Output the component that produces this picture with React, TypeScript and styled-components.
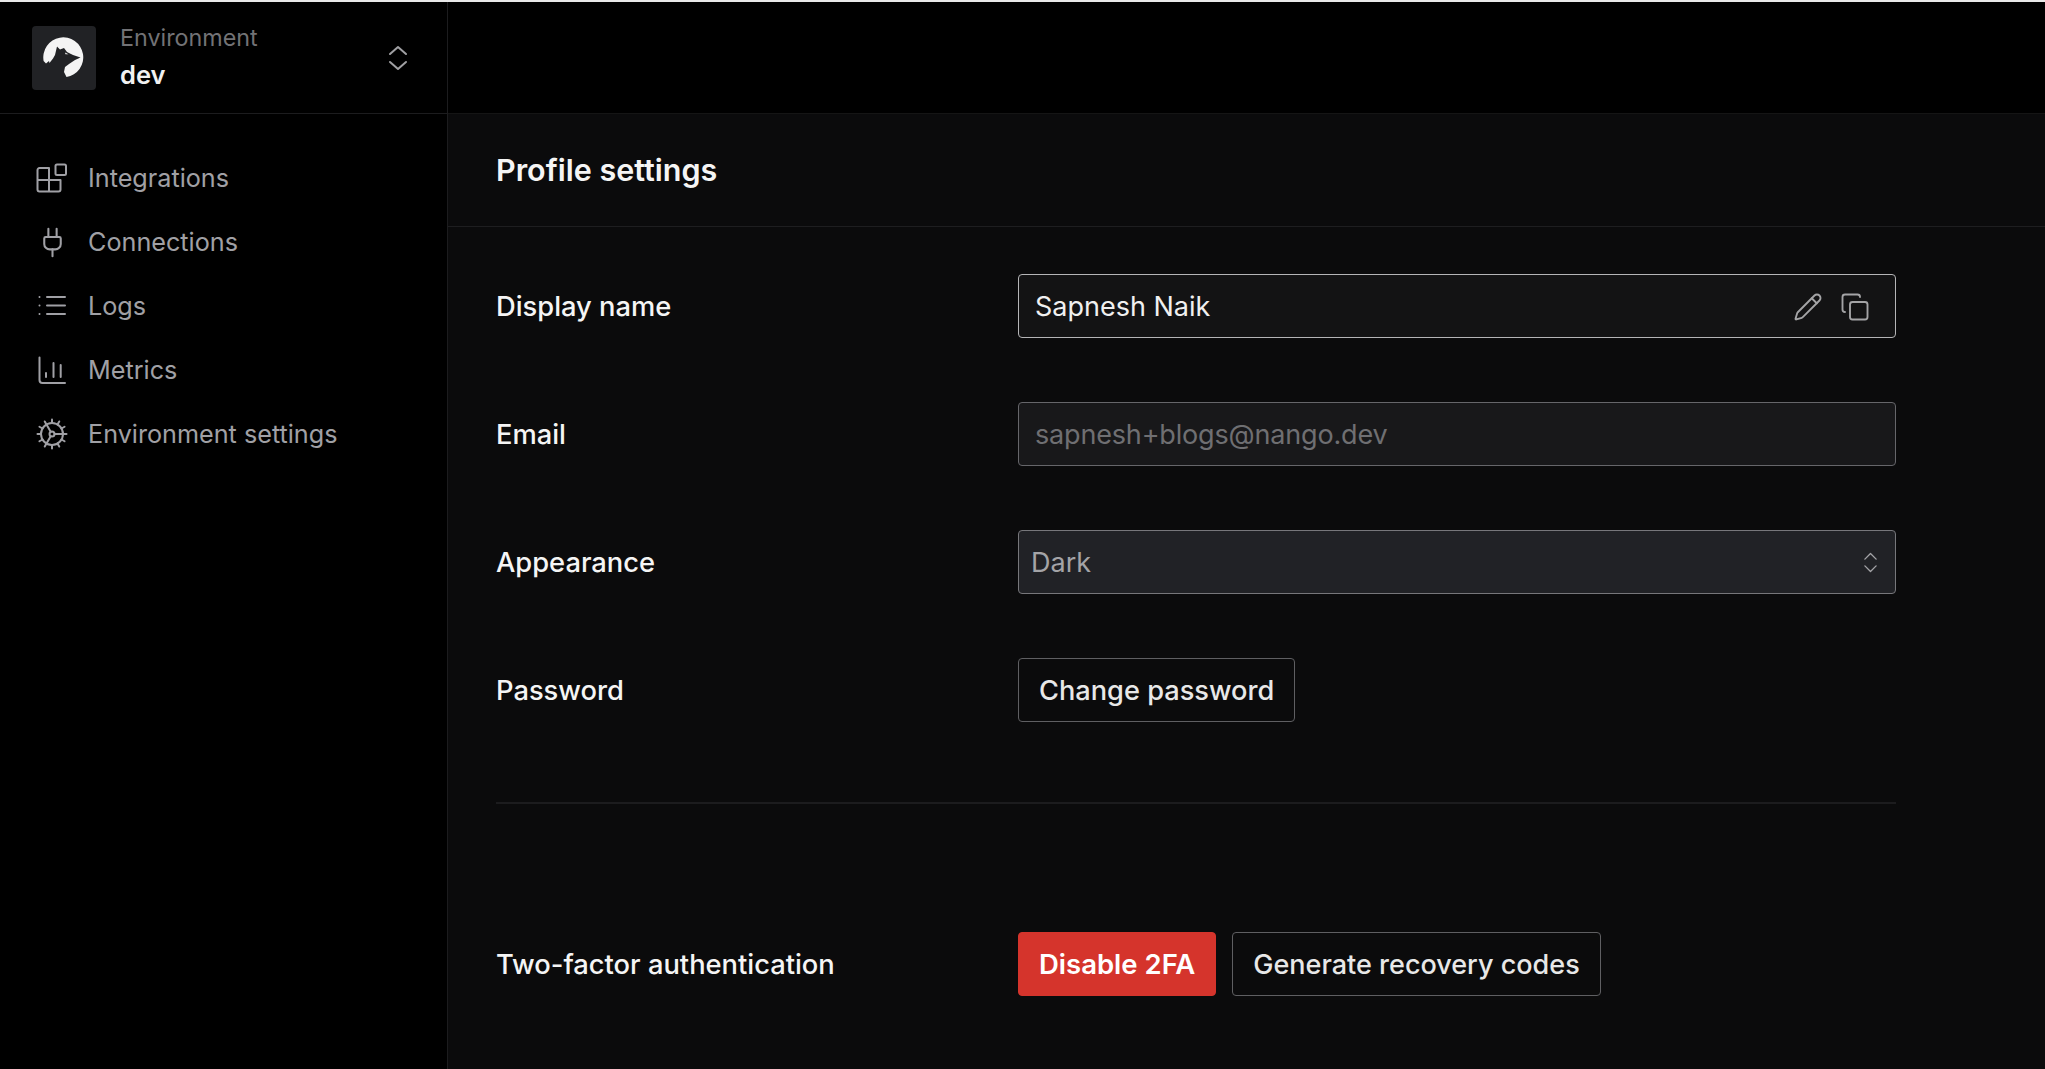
import React, { FC, ReactNode } from 'react';
import styled, { createGlobalStyle } from 'styled-components';
import { Plug, Pencil, Copy, ChevronsUpDown } from 'lucide-react';

const GlobalStyle = createGlobalStyle`
   * { box-sizing: border-box; }
   html, body { margin: 0; background: #000; }
   body { font-family: Inter, "Liberation Sans", sans-serif; overflow: hidden; }
`;

const IntegrationsIcon = () => (
   <svg width="32" height="32" viewBox="0 0 32 32" fill="none" stroke="currentColor" strokeWidth="2" strokeLinejoin="round">
      <rect x="19.5" y="2.5" width="10.5" height="10.5" rx="1.5" />
      <path d="M13 18H24.5V27.5a2 2 0 0 1 -2 2H3.500a2 2 0 0 1 -2 -2V8a2 2 0 0 1 2 -2H13V29.500" />
      <path d="M1.500 18H13" />
   </svg>
);

const LogsIcon = () => (
   <svg width="32" height="32" viewBox="0 0 32 32" fill="none" stroke="currentColor" strokeWidth="2" strokeLinecap="round">
      <path d="M11 7H29M11 15.500H29M11 24H29" />
      <path d="M3.500 7h.01M3.500 15.500h.01M3.500 24h.01" />
   </svg>
);

const MetricsIcon = () => (
   <svg width="32" height="32" viewBox="0 0 32 32" fill="none" stroke="currentColor" strokeWidth="2" strokeLinecap="round" strokeLinejoin="round">
      <path d="M3.500 3.500V26a3 3 0 0 0 3 3H29" />
      <path d="M10 19v4" />
      <path d="M17.500 9v14" />
      <path d="M24.700 11v12" />
   </svg>
);

const gearTeeth = Array.from({ length: 12 }, (_, i) => (i * Math.PI) / 6);

const SettingsIcon = () => (
   <svg width="32" height="32" viewBox="0 0 32 32" fill="none" stroke="currentColor" strokeWidth="2" strokeLinecap="round" strokeLinejoin="round">
      <circle cx="16" cy="16" r="11" />
      <circle cx="16" cy="16" r="2.500" />
      {gearTeeth.map((a, i) => (
         <line key={i} x1={16 + 11 * Math.cos(a)} y1={16 + 11 * Math.sin(a)} x2={16 + 14.5 * Math.cos(a)} y2={16 + 14.5 * Math.sin(a)} />
      ))}
      <path d="M18.500 16H27M14.700 13.800L10.500 6.500M14.700 18.200L10.500 25.500" />
   </svg>
);

const WolfLogo = () => (
   <svg width="48" height="48" viewBox="0 0 48 48">
      <path
         fill="#f4f4f4"
         d="M26.500 43.100A20 20 0 1 0 3.600 27L6 29.500L9 27L9.500 29L13 24.500L15 21L17 12.500L20 15.500L24 14L27 18L33 21L40.500 23.500L35 26L29 30L25 33L24 38Z"
      />
      <path fill="#f4f4f4" d="M25 18.500l3.500 1.800-3 0z" />
   </svg>
);

const UpDownChevrons = () => (
   <svg width="20" height="28" viewBox="0 0 20 28" fill="none" stroke="currentColor" strokeWidth="2" strokeLinecap="round" strokeLinejoin="round">
      <path d="M2 10L10 3L18 10" />
      <path d="M2 18L10 25L18 18" />
   </svg>
);

const NavItem: FC<{ icon: ReactNode; label: string }> = ({ icon, label }) => (
   <NavRow>
      <NavIcon>{icon}</NavIcon>
      <span>{label}</span>
   </NavRow>
);

const Field: FC<{ label: string; children: ReactNode }> = ({ label, children }) => (
   <FieldRow>
      <FieldLabel>{label}</FieldLabel>
      {children}
   </FieldRow>
);

const App: FC = () => (
   <Page>
      <GlobalStyle />
      <Sidebar>
         <EnvSwitcher>
            <LogoBox>
               <WolfLogo />
            </LogoBox>
            <EnvText>
               <EnvLabel>Environment</EnvLabel>
               <EnvName>dev</EnvName>
            </EnvText>
            <EnvChevron>
               <UpDownChevrons />
            </EnvChevron>
         </EnvSwitcher>
         <Nav>
            <NavItem icon={<IntegrationsIcon />} label="Integrations" />
            <NavItem icon={<Plug size={33} strokeWidth={1.5} />} label="Connections" />
            <NavItem icon={<LogsIcon />} label="Logs" />
            <NavItem icon={<MetricsIcon />} label="Metrics" />
            <NavItem icon={<SettingsIcon />} label="Environment settings" />
         </Nav>
      </Sidebar>
      <Main>
         <TopBar />
         <Content>
            <PageTitle>Profile settings</PageTitle>
            <Form>
               <Field label="Display name">
                  <EditableBox>
                     <span>Sapnesh Naik</span>
                     <BoxIcons>
                        <Pencil size={30} strokeWidth={1.5} />
                        <Copy size={30} strokeWidth={1.5} />
                     </BoxIcons>
                  </EditableBox>
               </Field>
               <Field label="Email">
                  <DisabledBox>sapnesh+blogs@nango.dev</DisabledBox>
               </Field>
               <Field label="Appearance">
                  <SelectBox>
                     <span>Dark</span>
                     <ChevronsUpDown size={27} strokeWidth={1.2} />
                  </SelectBox>
               </Field>
               <Field label="Password">
                  <PasswordButton>Change password</PasswordButton>
               </Field>
               <Divider />
               <Field label="Two-factor authentication">
                  <ButtonRow>
                     <DangerButton>Disable 2FA</DangerButton>
                     <OutlineButton>Generate recovery codes</OutlineButton>
                  </ButtonRow>
               </Field>
            </Form>
         </Content>
      </Main>
   </Page>
);

export default App;

const Page = styled.div`
   width: 2045px;
   height: 1069px;
   display: flex;
   background: #000;
   border-top: 2px solid #e8e8e8;
   overflow: hidden;
`;

const Sidebar = styled.aside`
   width: 448px;
   flex: none;
   background: #000;
   border-right: 1px solid #1c1c1e;
`;

const EnvSwitcher = styled.div`
   height: 112px;
   padding: 0 39px 0 32px;
   display: flex;
   align-items: center;
   border-bottom: 1px solid #1c1c1e;
`;

const LogoBox = styled.div`
   width: 64px;
   height: 64px;
   flex: none;
   display: flex;
   align-items: center;
   justify-content: center;
   background: #212225;
   border-radius: 4px;
`;

const EnvText = styled.div`
   flex: 1;
   margin-left: 24px;
`;

const EnvLabel = styled.div`
   margin-top: -2px;
   font-size: 23.300px;
   line-height: 36px;
   color: #727275;
`;

const EnvName = styled.div`
   font-size: 25.500px;
   line-height: 38px;
   font-weight: 600;
   color: #f1f1f1;
`;

const EnvChevron = styled.div`
   display: flex;
   color: #a0a0a3;
`;

const Nav = styled.nav`
   padding: 44px 0 0 36px;
   display: flex;
   flex-direction: column;
   gap: 24px;
`;

const NavRow = styled.div`
   height: 40px;
   display: flex;
   align-items: center;
   gap: 20px;
   font-size: 25.200px;
   color: #a0a0a5;
`;

const NavIcon = styled.span`
   width: 32px;
   height: 32px;
   display: flex;
   align-items: center;
   justify-content: center;

   svg {
      flex: none;
   }
`;

const Main = styled.main`
   flex: 1;
   display: flex;
   flex-direction: column;
`;

const TopBar = styled.div`
   height: 112px;
   flex: none;
   background: #000;
   border-bottom: 1px solid #151515;
`;

const Content = styled.div`
   flex: 1;
   background: #0b0b0c;
`;

const PageTitle = styled.h1`
   margin: 0;
   height: 113px;
   padding: 0 48px 2px;
   display: flex;
   align-items: center;
   font-size: 30.500px;
   font-weight: 600;
   color: #f5f5f5;
   border-bottom: 1px solid #1e1e20;
`;

const Form = styled.div`
   padding: 47px 149px 0 48px;
`;

const FieldRow = styled.div`
   min-height: 64px;
   margin-bottom: 64px;
   display: grid;
   grid-template-columns: 522px 1fr;
   align-items: center;
`;

const FieldLabel = styled.label`
   font-size: 27.300px;
   font-weight: 500;
   color: #f5f5f5;
`;

const Box = styled.div`
   height: 64px;
   padding: 1px 16px 0;
   display: flex;
   align-items: center;
   justify-content: space-between;
   font-size: 27px;
   border-radius: 4px;
`;

const EditableBox = styled(Box)`
   padding-right: 25px;
   color: #f0f0f0;
   background: #131314;
   border: 1.500px solid #b5b5b7;
`;

const BoxIcons = styled.span`
   display: flex;
   gap: 17px;
   color: #a4a4a6;
`;

const DisabledBox = styled(Box)`
   letter-spacing: -0.17px;
   color: #6f6f72;
   background: #18181a;
   border: 1.500px solid #66666a;
`;

const SelectBox = styled(Box)`
   padding: 1px 11px 0 12px;
   color: #a4a4a7;
   background: #212226;
   border: 1.500px solid #77777b;
`;

const ButtonRow = styled.div`
   display: flex;
   gap: 16px;
`;

const OutlineButton = styled.button`
   height: 64px;
   width: fit-content;
   padding: 0 20px;
   font: 500 27px Inter, "Liberation Sans", sans-serif;
   color: #e8e8e8;
   background: transparent;
   border: 1.500px solid #5f5f62;
   border-radius: 4px;
`;

const PasswordButton = styled(OutlineButton)`
   font-size: 27.200px;
`;

const DangerButton = styled(OutlineButton)`
   font-size: 27.500px;
   font-weight: 600;
   color: #fff;
   background: #d5342c;
   border-color: #d5342c;
`;

const Divider = styled.hr`
   height: 2px;
   margin: 80px 0 128px;
   border: none;
   background: #1c1c1e;
`;
